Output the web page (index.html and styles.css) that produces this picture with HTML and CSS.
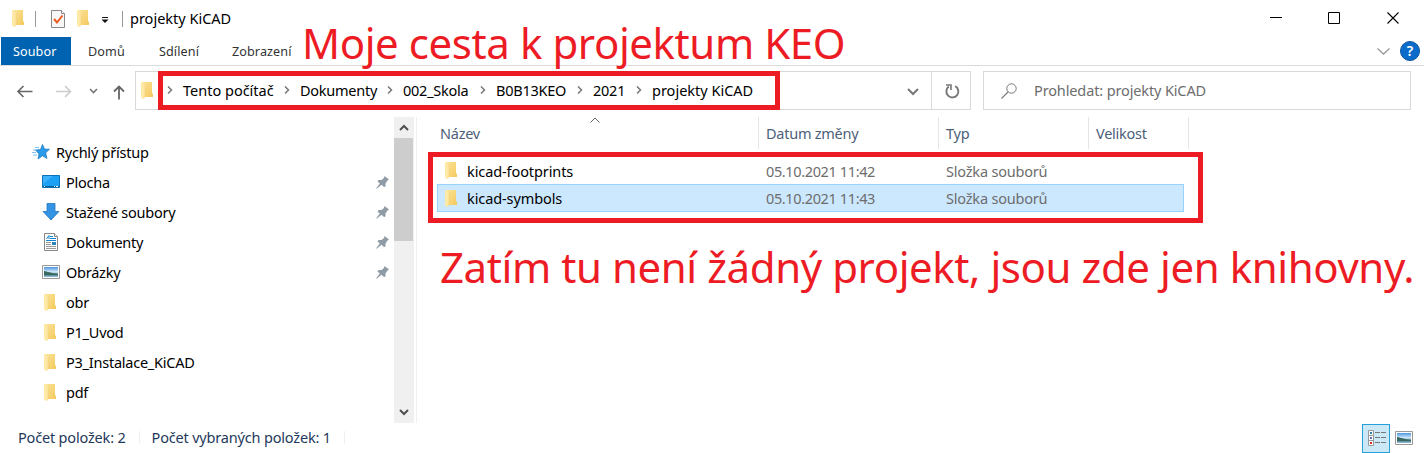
FILE: index.html
```
<!DOCTYPE html>
<html lang="cs">
<head>
<meta charset="utf-8">
<title>projekty KiCAD</title>
<link rel="stylesheet" href="styles.css">
</head>
<body>
<svg class="defs" width="0" height="0">
  <defs>
    <linearGradient id="fg" x1="0" y1="0" x2="1" y2="1"><stop offset="0" stop-color="#fce49a"/><stop offset="1" stop-color="#f3c95c"/></linearGradient>
    <linearGradient id="sky" x1="0" y1="0" x2="0" y2="1"><stop offset="0" stop-color="#4f93e0"/><stop offset=".5" stop-color="#d5ecfa"/><stop offset=".7" stop-color="#5f8b96"/><stop offset="1" stop-color="#8fbcdb"/></linearGradient>
    <symbol id="folder" viewBox="0 0 12 17"><path d="M1 0h10v11l1 1v3H1z" fill="url(#fg)"/><path d="M0 0l4 2v13l-2 2-2-2z" fill="#ffe9a6"/><path d="M4 2v13l-1.500 2" fill="none" stroke="#f2d27c" stroke-width=".6"/></symbol>
    <symbol id="pin" viewBox="0 0 13 13"><path d="M8.500 0L13 3.500 11.500 4.500 9.500 7.500 9.500 10.500 8 11 5.500 8.800 1 12.500 0 12.500 3.800 7.500 1.500 5.500 2.500 4 5.500 4 8 2z" fill="#8f9ba5"/></symbol>
    <symbol id="sep" viewBox="0 0 6 8"><path d="M1 .5L4.500 4 1 7.500" fill="none" stroke="#777" stroke-width="1.500"/></symbol>
    <symbol id="picture" viewBox="0 0 18 14"><path d="M.5.5h17v13H.5z" fill="#fff" stroke="#999"/><path d="M2 2h14v10H2z" fill="url(#sky)"/><path d="M2 6c3 .5 7 2 14 3v1.200H2z" fill="#38685e"/></symbol>
  </defs>
</svg>
<div class="window">
  <header class="titlebar">
    <svg class="folder"><use href="#folder"/></svg>
    <i class="bar bar-a"></i>
    <svg class="check" viewBox="0 0 14 18"><path d="M.5.5h10l3 3v14H.5z" fill="#f7f7f7" stroke="#888"/><path d="M10.500.5v3h3" fill="#fff" stroke="#888"/><path d="M3 9l3 3.500L11.500 5.500" fill="none" stroke="#f0591c" stroke-width="2"/></svg>
    <svg class="folder"><use href="#folder"/></svg>
    <svg class="quick" viewBox="0 0 8 6"><path d="M1 .5h6" stroke="#111"/><path d="M.5 2.500h7L4 6z" fill="#111"/></svg>
    <i class="bar bar-b"></i>
    <span class="title">projekty KiCAD</span>
    <svg class="controls" viewBox="0 0 132 13"><path d="M1 5.500h12M59.500.5h11v11h-11z" fill="none" stroke="#000"/><path d="M118.500.5l11 11M129.500.5l-11 11" stroke="#000" stroke-width="1.100"/></svg>
  </header>
  <nav class="tabs">
    <span class="tab active">Soubor</span><span class="tab home">Domů</span><span class="tab share">Sdílení</span><span class="tab">Zobrazení</span>
    <svg class="collapse" viewBox="0 0 13 7"><path d="M.5.5l6 5.500 6-5.500" fill="none" stroke="#999" stroke-width="1.300"/></svg>
    <span class="help">?</span>
  </nav>
  <div class="address-row">
    <svg class="arrows" viewBox="0 0 110 16"><g fill="none" stroke-width="1.600"><path d="M17.500 7.500H3M8.500 2L3 7.500l5.500 5.500" stroke="#666"/><path d="M41 7.500h14.500M50 2L55.500 7.500 50 13" stroke="#ccc"/><path d="M75 5l3.500 3.500L82 5" stroke="#777"/><path d="M104 15.500V2.500M99 7.500l5-5 5 5" stroke="#666" stroke-width="1.800"/></g></svg>
    <div class="address">
      <svg class="folder"><use href="#folder"/></svg>
      <div class="crumbs">
        <svg class="sep"><use href="#sep"/></svg><span>Tento počítač</span>
        <svg class="sep"><use href="#sep"/></svg><span class="tight">Dokumenty</span>
        <svg class="sep"><use href="#sep"/></svg><span class="tight">002_Skola</span>
        <svg class="sep"><use href="#sep"/></svg><span class="tight">B0B13KEO</span>
        <svg class="sep"><use href="#sep"/></svg><span class="tight">2021</span>
        <svg class="sep"><use href="#sep"/></svg><span>projekty KiCAD</span>
      </div>
      <svg class="drop" viewBox="0 0 12 8"><path d="M1 1l5 5 5-5" fill="none" stroke="#777" stroke-width="2"/></svg>
      <div class="refresh"><svg viewBox="0 0 15 15"><path d="M10.300 2.200A6 6 0 1 1 3.800 2.600" fill="none" stroke="#777" stroke-width="1.900"/><path d="M1 1h5v5" fill="none" stroke="#777" stroke-width="1.600"/></svg></div>
    </div>
    <div class="search">
      <svg viewBox="0 0 16 16"><circle cx="10.500" cy="5.500" r="4.700" fill="none" stroke="#777"/><path d="M7 9L.5 15.500" stroke="#777" stroke-width="1.100"/></svg>
      <span>Prohledat: projekty KiCAD</span>
    </div>
  </div>
  <main class="content">
    <aside class="sidebar">
      <div class="item root"><svg class="star" viewBox="0 0 18 16"><path d="M10.500.5l2 4.500 5 .3-3.800 3.500 1.200 5.700-4.400-2.700L6 15l1-5L3.500 6l5-.5z" fill="#2a9be8" stroke="#1677bd" stroke-width=".7"/><path d="M3 3.500h4M1 6h4M0 8.500h4M1 11h4" stroke="#6bbcf0" stroke-width=".9"/></svg><span>Rychlý přístup</span></div>
      <div class="item"><svg class="ico" viewBox="0 0 18 18"><path d="M.5 2.500h17v12H.5z" fill="#1ba1f4" stroke="#0872b8"/><path d="M1 11L11 3H1z" fill="#3db1fb"/><path d="M1 13.500h16" stroke="#075d97"/><path d="M2 13.500h1M12 13.500h1M14 13.500h2" stroke="#fff"/></svg><span>Plocha</span><svg class="pin"><use href="#pin"/></svg></div>
      <div class="item"><svg class="ico" viewBox="0 0 18 18"><path d="M5 .5h8v8h4L9 17 1 8.500h4z" fill="#3593e4" stroke="#2476bd" stroke-width=".8"/></svg><span>Stažené soubory</span><svg class="pin"><use href="#pin"/></svg></div>
      <div class="item"><svg class="ico" viewBox="0 0 18 18"><path d="M2.500.5h10l3 3v14h-13z" fill="#fff" stroke="#888"/><path d="M12.500.5v3h3" fill="#eee" stroke="#888"/><path d="M4.500 6L7 2.500V6M8 3.500h3M8 5.500h6M4 7.500h10" fill="none" stroke="#1486d0"/><path d="M4 9.500h5M4 11.500h5M4 13.500h10M4 15.500h10" stroke="#999"/><path d="M10 9h4v3h-4z" fill="#2b83bc"/></svg><span>Dokumenty</span><svg class="pin"><use href="#pin"/></svg></div>
      <div class="item"><svg class="picture"><use href="#picture"/></svg><span>Obrázky</span><svg class="pin"><use href="#pin"/></svg></div>
      <div class="item"><svg class="folder"><use href="#folder"/></svg><span>obr</span></div>
      <div class="item"><svg class="folder"><use href="#folder"/></svg><span>P1_Uvod</span></div>
      <div class="item"><svg class="folder"><use href="#folder"/></svg><span>P3_Instalace_KiCAD</span></div>
      <div class="item"><svg class="folder"><use href="#folder"/></svg><span>pdf</span></div>
    </aside>
    <div class="scrollbar">
      <svg viewBox="0 0 10 7"><path d="M1 6l4-4 4 4" fill="none" stroke="#505050" stroke-width="2"/></svg>
      <div class="thumb"></div>
      <svg class="down" viewBox="0 0 10 7"><path d="M1 1l4 4 4-4" fill="none" stroke="#505050" stroke-width="2"/></svg>
    </div>
    <section class="files">
      <div class="row head"><span>Název</span><span>Datum změny</span><span>Typ</span><span>Velikost</span>
        <svg class="sort" viewBox="0 0 10 6"><path d="M.5 5.500L5 1l4.500 4.500" fill="none" stroke="#666"/></svg></div>
      <div class="rows">
        <div class="row"><span class="name"><svg class="folder"><use href="#folder"/></svg>kicad-footprints</span><span class="date">05.10.2021 11:42</span><span>Složka souborů</span></div>
        <div class="row selected"><span class="name"><svg class="folder"><use href="#folder"/></svg>kicad-symbols</span><span class="date">05.10.2021 11:43</span><span>Složka souborů</span></div>
      </div>
    </section>
  </main>
  <footer class="status">
    <span class="count">Počet položek: 2</span><span class="count">Počet vybraných položek: 1</span>
    <div class="view active"><svg viewBox="0 0 18 16"><g fill="#fff" stroke="#999"><path d="M.5.500h5v5h-5zM.5 5.500h5v5h-5zM.5 10.500h5v5h-5z"/></g><path d="M2 3h2" stroke="#26809d" stroke-width="2"/><path d="M2 8h2" stroke="#6a6faf" stroke-width="2"/><path d="M2 13h2" stroke="#d43115" stroke-width="2"/><path d="M7 2.500h5M13 2.500h5M7 7.500h5M13 7.500h5M7 12.500h5M13 12.500h5" stroke="#777"/></svg></div>
    <svg class="picture"><use href="#picture"/></svg>
  </footer>
  <div class="mark mark-path"></div>
  <div class="mark mark-files"></div>
  <div class="note note-path">Moje cesta k projektum KEO</div>
  <div class="note note-files">Zatím tu není žádný projekt, jsou zde jen knihovny.</div>
</div>
</body>
</html>
```
FILE: styles.css
```
* { box-sizing: border-box; }
body { margin: 0; background: #fff; color: #000; font: 14.5px/20px "Noto Sans", "Open Sans", sans-serif; white-space: nowrap; overflow: hidden; }
svg { display: block; flex: none; }
.defs { position: absolute; }
.window { position: relative; width: 1424px; height: 453px; display: flex; flex-direction: column; }
.folder { width: 12px; height: 17px; }

.titlebar { height: 37px; display: flex; align-items: center; padding-left: 12px; }
.bar { width: 1px; height: 16px; background: #999; }
.bar-a { margin: 0 15px 0 11px; }
.bar-b { margin-left: 13px; }
.check { width: 14px; height: 18px; margin-right: 12px; }
.quick { width: 8px; height: 6px; margin: 3px 0 0 12px; }
.title { margin-left: 7px; padding-bottom: 2px; }
.controls { width: 132px; height: 13px; margin-left: auto; margin-right: 23px; }

.tabs { height: 29px; display: flex; border-bottom: 1px solid #dadbdc; padding-left: 1px; font-size: 12.6px; line-height: 29px; letter-spacing: .1px; color: #333; }
.tab.active { width: 70px; background: #0063b1; color: #fff; padding-left: 12px; margin-right: 17px; }
.home { width: 71px; }
.share { width: 73px; }
.collapse { width: 13px; height: 7px; margin: 11px 10px 0 auto; }
.help { width: 20px; height: 20px; margin: 4px 4px 0 0; border: 1px solid #07549b; border-radius: 50%; background: #0b6bcb; color: #fff; font-size: 14px; font-weight: 600; line-height: 18px; text-align: center; }

.address-row { height: 51px; padding: 5px 13px 7px 15px; display: flex; align-items: center; }
.arrows { width: 110px; height: 16px; margin: 2px 10px 0 0; }
.address { width: 836px; height: 39px; border: 1px solid #d9d9d9; display: flex; align-items: center; padding-left: 5px; }
.address .folder { margin-right: 14px; }
.crumbs { display: grid; grid-template-columns: 16px 101px 16px 87px 16px 77px 16px 81px 16px 43px 16px 106px; align-items: center; }
.crumbs span, .search span { padding-bottom: 2px; }
.crumbs .tight { letter-spacing: -.25px; }
.sep { width: 6px; height: 8px; margin-bottom: 1px; }
.drop { width: 12px; height: 8px; margin: 2px 12px 0 auto; }
.refresh { width: 39px; height: 37px; border-left: 1px solid #d9d9d9; display: flex; align-items: center; padding-left: 13px; }
.refresh svg { width: 15px; height: 15px; margin-top: 1px; }
.search { flex: 1; height: 39px; margin-left: 12px; border: 1px solid #d9d9d9; display: flex; align-items: center; padding-left: 17px; gap: 17px; color: #6d6d6d; letter-spacing: -.13px; }
.search svg { width: 16px; height: 16px; }

.content { height: 306px; display: flex; }
.sidebar { width: 394px; padding-top: 20px; letter-spacing: -.24px; }
.item { height: 30px; display: grid; grid-template-columns: 24px 1fr 13px; align-items: center; padding: 0 5px 0 42px; }
.item.root { padding-left: 32px; }
.item .folder { margin-left: 2px; }
.star { width: 18px; height: 16px; }
.ico { width: 18px; height: 18px; }
.picture { width: 18px; height: 14px; }
.pin { width: 13px; height: 13px; }
.scrollbar { width: 20px; background: #f0f0f0; border-right: 1px solid #f0f0f0; display: flex; flex-direction: column; align-items: center; padding: 7px 0; }
.scrollbar svg { width: 10px; height: 7px; }
.thumb { width: 19px; height: 103px; margin-top: 7px; background: #cdcdcd; }
.scrollbar .down { margin-top: auto; }
.files { flex: 1; margin-left: 2px; border-left: 1px solid #f0f0f0; padding-left: 20px; }
.row { display: grid; grid-template-columns: 322px 180px 150px 100px; align-items: center; color: #6d6d6d; }
.head { position: relative; height: 32px; width: 752px; color: #4c607a; letter-spacing: -.25px; }
.head span { height: 32px; line-height: 33px; border-right: 1px solid #e5e5e5; padding-left: 7px; }
.head span:first-child { padding-left: 3px; }
.sort { position: absolute; left: 153px; top: 0; width: 10px; height: 6px; }
.rows { padding-top: 8px; }
.rows .row { height: 27px; width: 747px; border: 1px solid transparent; grid-template-columns: 328px 180px 150px; letter-spacing: -.2px; }
.rows .row.selected { height: 28px; background: #cce8ff; border-color: #99d1ff; }
.name { display: flex; align-items: center; gap: 10px; padding-left: 7px; color: #000; letter-spacing: -.1px; }
.rows .date { letter-spacing: -.37px; }

.status { height: 30px; display: flex; align-items: center; padding: 0 11px 0 18px; color: #1e395b; letter-spacing: -.18px; }
.count { border-right: 1px solid #f0f0f0; padding-right: 13px; margin: 0 12px 2px 0; line-height: 13px; }
.view { width: 28px; height: 29px; margin-left: auto; margin-right: 5px; border: 1px solid #26a0da; background: #cbe8f6; display: flex; align-items: center; padding-left: 5px; }
.view svg { width: 18px; height: 16px; }

.mark { position: absolute; border: 5px solid #ed1c24; }
.mark-path { left: 158px; top: 71px; width: 622px; height: 39px; }
.mark-files { left: 428px; top: 152px; width: 775px; height: 71px; }
.note { position: absolute; color: #ed1c24; font-size: 42px; line-height: 50px; letter-spacing: -.42px; }
.note-path { left: 302px; top: 18px; }
.note-files { left: 440px; top: 242px; }
```
